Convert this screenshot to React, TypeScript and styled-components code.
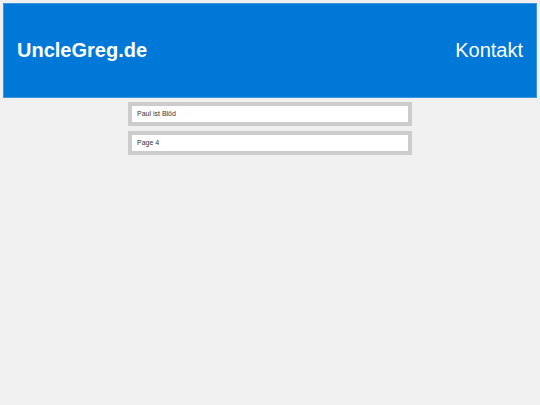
import React from 'react';
import styled, { createGlobalStyle } from 'styled-components';

const GlobalStyle = createGlobalStyle`
  html, body {
    margin: 0;
    padding: 0;
    background: #f0f0f0;
    font-family: "Liberation Sans", Arial, sans-serif;
  }
`;

const Page = styled.div`
  padding: 3px;
`;

const Header = styled.header`
  display: flex;
  align-items: center;
  justify-content: space-between;
  height: 95px;
  padding: 0 14px;
  box-sizing: border-box;
  background: #0078d7;
  box-shadow: inset 0 0 0 1px #3d95e0;
  color: #fff;
`;

const Brand = styled.div`
  font-size: 20px;
  font-weight: bold;
`;

const NavLink = styled.a`
  font-size: 20px;
  color: #fff;
  text-decoration: none;
`;

const List = styled.main`
  display: flex;
  flex-direction: column;
  align-items: center;
  gap: 5px;
  padding-top: 4px;
`;

const Card = styled.div`
  width: 266px;
  border: 4px solid #cccccc;
  background: #fff;
  padding: 4px 5px;
  box-sizing: content-box;
  font-size: 7px;
  line-height: 8px;
  height: 8px;
  color: #333;
`;

const posts = ['Paul ist Blöd', 'Page 4'];

export default function App() {
  return (
    <>
      <GlobalStyle />
      <Page>
        <Header>
          <Brand>UncleGreg.de</Brand>
          <NavLink href="#">Kontakt</NavLink>
        </Header>
        <List>
          {posts.map((p) => (
            <Card key={p}>{p}</Card>
          ))}
        </List>
      </Page>
    </>
  );
}
